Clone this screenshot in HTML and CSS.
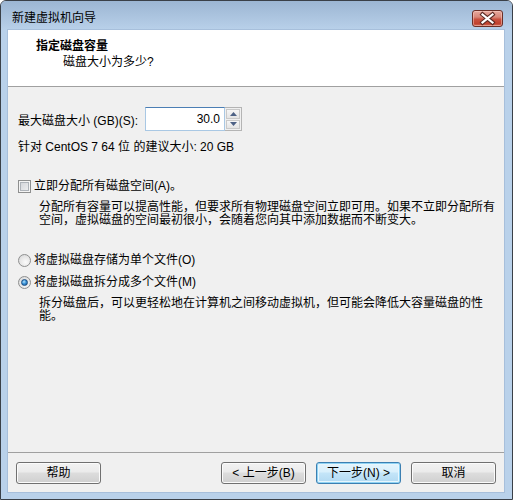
FILE: index.html
```html
<!DOCTYPE html>
<html lang="zh-CN">
<head>
<meta charset="utf-8">
<title>新建虚拟机向导</title>
<link rel="stylesheet" href="styles.css">
</head>
<body>
<div class="window">
  <div class="titlebar">
    <span class="title">新建虚拟机向导</span>
    <div class="close">
      <svg width="31" height="17" viewBox="0 0 31 17">
        <path d="M10.5 4.5 L20.5 12.5 M20.5 4.5 L10.5 12.5" stroke="#5b2a24" stroke-width="4.2" stroke-linecap="square" fill="none"/>
        <path d="M10.5 4.5 L20.5 12.5 M20.5 4.5 L10.5 12.5" stroke="#ffffff" stroke-width="2.2" stroke-linecap="square" fill="none"/>
      </svg>
    </div>
  </div>
  <div class="client">
    <div class="header">
      <div class="h-title">指定磁盘容量</div>
      <div class="h-sub">磁盘大小为多少?</div>
    </div>
    <div class="body">
      <div class="size-row">
        <span class="size-label">最大磁盘大小 (GB)(S):</span>
        <div class="spin">
          <div class="spin-input">30.0</div>
          <div class="spin-btns">
            <span class="spin-btn"><svg width="7" height="4" viewBox="0 0 7 4"><polygon points="0,4 7,4 3.5,0" fill="#4d6185"/></svg></span>
            <span class="spin-btn"><svg width="7" height="4" viewBox="0 0 7 4"><polygon points="0,0 7,0 3.5,4" fill="#4d6185"/></svg></span>
          </div>
        </div>
      </div>
      <div class="line rec">针对 CentOS 7 64 位 的建议大小: 20 GB</div>
      <div class="line option check-row"><span class="checkbox"></span><span>立即分配所有磁盘空间(A)。</span></div>
      <p class="desc">分配所有容量可以提高性能，但要求所有物理磁盘空间立即可用。如果不立即分配所有空间，虚拟磁盘的空间最初很小，会随着您向其中添加数据而不断变大。</p>
      <div class="line option radio-row r1"><span class="radio"></span><span>将虚拟磁盘存储为单个文件(O)</span></div>
      <div class="line option radio-row r2"><span class="radio checked"></span><span>将虚拟磁盘拆分成多个文件(M)</span></div>
      <p class="desc">拆分磁盘后，可以更轻松地在计算机之间移动虚拟机，但可能会降低大容量磁盘的性能。</p>
    </div>
    <div class="footer">
      <button class="btn">帮助</button>
      <span class="spacer"></span>
      <button class="btn">&lt; 上一步(B)</button>
      <button class="btn default">下一步(N) &gt;</button>
      <button class="btn">取消</button>
    </div>
  </div>
</div>
</body>
</html>
```
FILE: styles.css
```css
html, body {
  margin: 0;
  padding: 0;
  background: #ffffff;
}

body {
  font-family: "Liberation Sans", "Noto Sans CJK SC", sans-serif;
  font-size: 12px;
  color: #000;
}

.window {
  width: 513px;
  height: 500px;
  box-sizing: border-box;
  border: 1px solid #3a4048;
  border-radius: 6px 6px 0 0;
  background: #b9d1ea;
  display: flex;
  flex-direction: column;
}

.titlebar {
  height: 29px;
  flex: none;
  box-sizing: border-box;
  padding: 9px 9px 0 11px;
  display: flex;
  justify-content: space-between;
  align-items: flex-start;
  background: linear-gradient(#9cb6d3, #b3cbe5 80%, #b9d1ea);
  border-radius: 5px 5px 0 0;
}

.title {
  line-height: 17px;
  color: #000;
}

.close {
  width: 31px;
  height: 17px;
  box-sizing: border-box;
  border: 1px solid #6b2f27;
  border-radius: 3px;
  background: linear-gradient(#e7a99d 0%, #d8887a 40%, #c9513f 55%, #c0412e 85%, #d2705e 100%);
  box-shadow: inset 0 0 0 1px rgba(255, 220, 210, 0.45);
  display: flex;
  align-items: center;
  justify-content: center;
}

.close svg {
  display: block;
  margin: -1px;
}

.client {
  height: 462px;
  margin: 0 8px 0 7px;
  flex: none;
  display: flex;
  flex-direction: column;
  background: #f0f0f0;
  box-shadow: 0 0 0 1px #a7bfdb;
}

.header {
  height: 56px;
  flex: none;
  background: #ffffff;
  border-bottom: 1px solid #a0a0a0;
  padding-top: 8px;
  box-sizing: content-box;
  height: 48px;
}

.h-title {
  line-height: 16px;
  font-weight: bold;
  padding-left: 28px;
}

.h-sub {
  line-height: 16px;
  padding-left: 55px;
}

.body {
  flex: 1;
  padding: 20px 0 0 10px;
}

.size-row {
  display: flex;
  align-items: center;
  height: 24px;
}

.size-label {
  width: 127px;
  flex: none;
}

.spin {
  display: flex;
  height: 24px;
}

.spin-input {
  width: 80px;
  height: 24px;
  box-sizing: border-box;
  border: 1px solid #a9c8e4;
  border-top-color: #4b7eb4;
  background: #fff;
  text-align: right;
  padding-right: 4px;
  line-height: 22px;
}

.spin-btns {
  width: 17px;
  height: 24px;
  box-sizing: border-box;
  border: 1px solid #b4b4b4;
  border-left: none;
  padding: 1px;
  display: flex;
  flex-direction: column;
  background: #f0f0f0;
}

.spin-btn {
  flex: 1;
  display: flex;
  align-items: center;
  justify-content: center;
  border: 1px solid #c9c9c9;
  background: linear-gradient(#f6f6f6, #e4e4e4);
}

.spin-btn + .spin-btn {
  margin-top: 1px;
}

.spin-btn svg {
  display: block;
}

.line {
  line-height: 14px;
}

.rec {
  margin-top: 9px;
}

.option {
  display: flex;
  align-items: center;
  height: 14px;
}

.check-row {
  margin-top: 25px;
}

.r1 {
  margin-top: 26px;
}

.r2 {
  margin-top: 8px;
}

.checkbox {
  width: 13px;
  height: 13px;
  box-sizing: border-box;
  border: 1px solid #8e8f8f;
  background: #f4f4f4;
  margin-right: 3px;
  flex: none;
  position: relative;
  box-shadow: inset 0 0 0 1px #f4f4f4, inset 0 0 0 2px #aeb3b9;
  background: linear-gradient(135deg, #cdd0d5, #f3f3f4);
}

.radio {
  width: 13px;
  height: 13px;
  box-sizing: border-box;
  border-radius: 50%;
  border: 1px solid #8e8f8f;
  background: radial-gradient(circle at 60% 65%, #fbfbfb 0%, #e4e4e4 60%, #cfd1d4 100%);
  margin-right: 3px;
  flex: none;
  display: flex;
  align-items: center;
  justify-content: center;
}

.radio.checked::after {
  content: "";
  width: 7px;
  height: 7px;
  box-sizing: border-box;
  border-radius: 50%;
  border: 1px solid #1c4e82;
  background: radial-gradient(circle at 40% 35%, #b6e3fb 0%, #3b94d9 45%, #12508f 100%);
}

.desc {
  margin: 8px 0 0 21px;
  width: 460px;
  line-height: 13px;
}

.footer {
  height: 40px;
  flex: none;
  box-sizing: border-box;
  border-top: 1px solid #a0a0a0;
  padding: 9px 8px 8px 8px;
  display: flex;
  align-items: flex-start;
  gap: 10px;
}

.spacer {
  flex: 1;
}

.btn {
  width: 85px;
  height: 22px;
  margin: 0;
  padding: 0;
  font-family: inherit;
  font-size: 12px;
  color: #000;
  border: 1px solid #707070;
  border-radius: 3px;
  background: linear-gradient(#f2f2f2 0%, #ebebeb 45%, #dddddd 50%, #cfcfcf 100%);
  box-shadow: inset 0 0 0 1px #fbfbfb;
  line-height: 18px;
}

.btn.default {
  border-color: #3c7fb1;
  background: linear-gradient(#e5f4fc 0%, #d9f0fc 45%, #c4e5f8 50%, #b1d9f2 100%);
  box-shadow: inset 0 0 0 1px #8fd3f4, inset 0 0 0 2px #e8f6fd;
}
```
